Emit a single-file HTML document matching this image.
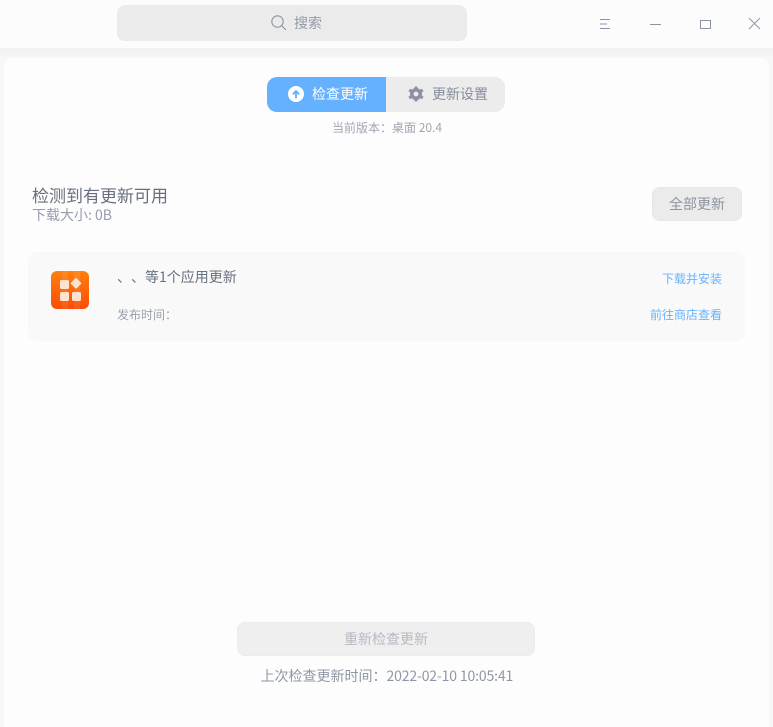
<!DOCTYPE html>
<html lang="zh-CN">
<head>
<meta charset="utf-8">
<style>
html,body{margin:0;padding:0;width:773px;height:727px;overflow:hidden;background:#f7f7f7;font-family:"Noto Sans CJK SC","Liberation Sans",sans-serif;text-spacing-trim:space-all;}
.a{position:absolute;white-space:nowrap;}
.t{line-height:20px;height:20px;}
</style>
</head>
<body>
<div class="a" style="left:0;top:0;width:773px;height:48px;background:#fcfcfc"></div>
<div class="a" style="left:0;top:48px;width:773px;height:10px;background:linear-gradient(#f1f1f1,#f7f7f7)"></div>
<div class="a" style="left:4px;top:58px;width:765px;height:669px;background:#fdfdfd;border-radius:8px 8px 0 0"></div>

<div class="a" style="left:117px;top:5px;width:350px;height:36px;background:#ebebeb;border-radius:8px"></div>
<svg class="a" style="left:270px;top:14px" width="18" height="18" viewBox="0 0 18 18" fill="none" stroke="#8f95a3" stroke-width="1.1"><circle cx="7.5" cy="7.5" r="5.7"/><path d="M11.6 11.6L16 16"/></svg>
<div class="a t" style="left:294px;top:13px;font-size:14px;color:#929aaa">搜索</div>

<svg class="a" style="left:590px;top:10px" width="175" height="30" viewBox="0 0 175 30" fill="none" stroke="#8b93a5" stroke-width="1">
<path d="M10 9.5h10M10 14h7M10 18.5h10"/>
<path d="M60 14.5h11"/>
<rect x="110.5" y="10.5" width="10" height="8"/>
<path d="M159 8l11 11M170 8l-11 11" stroke-width=".9"/>
</svg>

<div class="a" style="left:266.5px;top:76.5px;width:238.5px;height:35px;background:#ececec;border-radius:10px;overflow:hidden">
<div style="width:119.5px;height:35px;background:#65b1ff"></div>
</div>
<svg class="a" style="left:288px;top:86px" width="16" height="16" viewBox="0 0 16 16"><circle cx="8" cy="8" r="8" fill="#fff"/><path d="M8 12.3V5.5M4.9 8.3L8 5l3.1 3.3" fill="none" stroke="#65b1ff" stroke-width="1.9"/></svg>
<div class="a t" style="left:312px;top:84px;font-size:14px;color:#fff">检查更新</div>
<svg class="a" style="left:408px;top:86px" width="16" height="16" viewBox="0 0 16 16"><circle cx="8" cy="8" r="4.2" fill="none" stroke="#8a91a1" stroke-width="3.6"/><g stroke="#8a91a1" stroke-width="3"><path d="M8 .6v3M8 12.4v3M1.2 4.1l2.6 1.5M12.2 10.4l2.6 1.5M14.8 4.1l-2.6 1.5M3.8 10.4l-2.6 1.5"/></g></svg>
<div class="a t" style="left:432px;top:84px;font-size:14px;color:#868d9c">更新设置</div>
<div class="a t" style="left:332px;top:118px;font-size:12px;color:#a0a6b2">当前版本：桌面 20.4</div>

<div class="a" style="left:32px;top:184px;font-size:17px;line-height:22px;color:#68707f">检测到有更新可用</div>
<div class="a t" style="left:32px;top:205px;font-size:14px;color:#959cab">下载大小: 0B</div>
<div class="a" style="left:652px;top:187px;width:88px;height:32px;background:#ebebeb;border:1px solid #e6e6e6;border-radius:8px;text-align:center;line-height:32px;font-size:14px;color:#8d93a1">全部更新</div>

<div class="a" style="left:28px;top:252px;width:717px;height:89px;background:#f9f9f9;border-radius:8px"></div>
<svg class="a" style="left:51px;top:271px" width="38" height="38" viewBox="0 0 38 38">
<defs><linearGradient id="g" x1="0" y1="0" x2="0" y2="1"><stop offset="0" stop-color="#ff8010"/><stop offset="1" stop-color="#fa4c06"/></linearGradient></defs>
<rect width="38" height="38" rx="6" fill="url(#g)"/>
<path d="M11 0h6v38h-6zM23 0h6v38h-6z" fill="#fff" opacity=".08"/>
<g fill="#fde3d0"><rect x="9" y="9" width="9" height="9" rx="1.5"/><rect x="9" y="21" width="9" height="9" rx="1.5"/><rect x="21" y="21" width="9" height="9" rx="1.5"/><rect x="21" y="8.3" width="8" height="8" rx="1" transform="rotate(45 25 12.3)"/></g>
</svg>
<div class="a t" style="left:117px;top:267px;font-size:14px;color:#66707f">、、等1个应用更新</div>
<div class="a t" style="left:117px;top:305px;font-size:12px;color:#9aa1ae">发布时间：</div>
<div class="a t" style="left:662px;top:269px;font-size:12px;color:#66b3ff">下载并安装</div>
<div class="a t" style="left:650px;top:305px;font-size:12px;color:#66b3ff">前往商店查看</div>

<div class="a" style="left:237px;top:622px;width:296px;height:32px;background:#efefef;border:1px solid #ececec;border-radius:8px;text-align:center;line-height:32px;font-size:14px;color:#b6bac3">重新检查更新</div>
<div class="a t" style="left:260.5px;top:666px;font-size:14px;color:#8f96a5">上次检查更新时间：<span style="letter-spacing:-.15px">2022-02-10 10:05:41</span></div>
</body>
</html>
